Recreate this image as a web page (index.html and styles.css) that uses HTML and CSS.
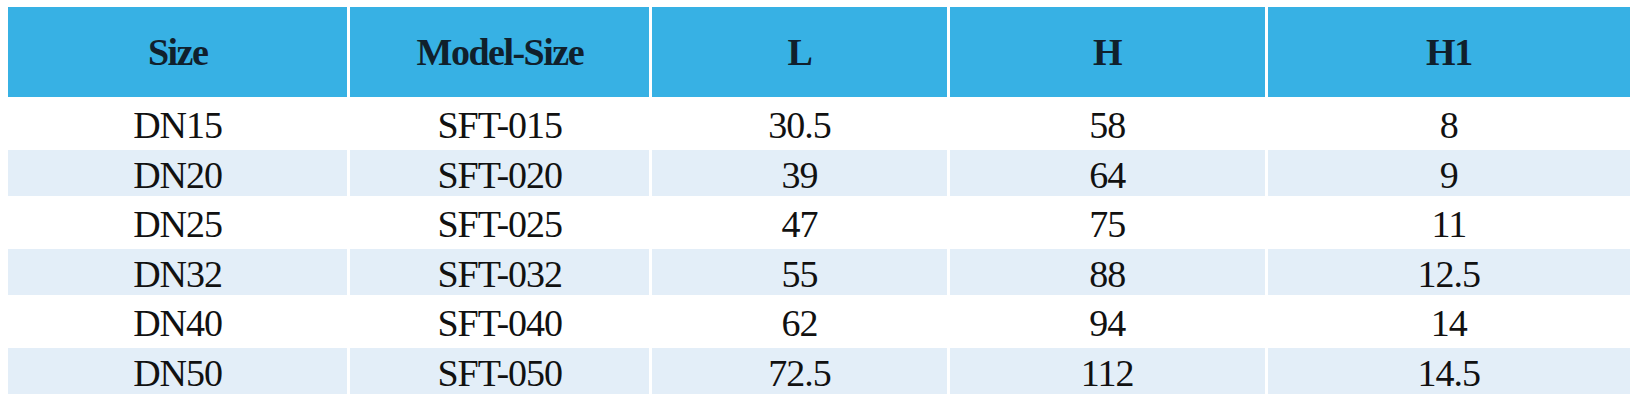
FILE: index.html
```html
<!DOCTYPE html>
<html lang="en">
  <head>
    <meta charset="UTF-8" />
    <meta name="viewport" content="width=device-width, initial-scale=1.0" />
    <title>SFT Dimensions</title>
    <link rel="stylesheet" href="styles.css">
  </head>
  <body>
    <div class="container">
      <table class="spec-table">
        <colgroup>
          <col class="col-size" />
          <col class="col-model" />
          <col class="col-l" />
          <col class="col-h" />
          <col class="col-h1" />
        </colgroup>
        <thead>
          <tr>
            <th>Size</th>
            <th>Model-Size</th>
            <th>L</th>
            <th>H</th>
            <th>H1</th>
          </tr>
        </thead>
        <tbody>
          <tr>
            <td>DN15</td>
            <td>SFT-015</td>
            <td>30.5</td>
            <td>58</td>
            <td>8</td>
          </tr>
          <tr>
            <td>DN20</td>
            <td>SFT-020</td>
            <td>39</td>
            <td>64</td>
            <td>9</td>
          </tr>
          <tr>
            <td>DN25</td>
            <td>SFT-025</td>
            <td>47</td>
            <td>75</td>
            <td>11</td>
          </tr>
          <tr>
            <td>DN32</td>
            <td>SFT-032</td>
            <td>55</td>
            <td>88</td>
            <td>12.5</td>
          </tr>
          <tr>
            <td>DN40</td>
            <td>SFT-040</td>
            <td>62</td>
            <td>94</td>
            <td>14</td>
          </tr>
          <tr>
            <td>DN50</td>
            <td>SFT-050</td>
            <td>72.5</td>
            <td>112</td>
            <td>14.5</td>
          </tr>
        </tbody>
      </table>
    </div>
  </body>
</html>
```

FILE: styles.css
```css
/* Reset */
* {
  margin: 0;
  padding: 0;
  box-sizing: border-box;
}
body {
  font-family: "Liberation Serif", "Times New Roman", serif;
  background: #fff;
  color: #111;
}
.container {
  padding: 4px 0 0 5px;
}
.spec-table {
  border-collapse: separate;
  border-spacing: 3px;
  table-layout: fixed;
  width: 1628px;
}
.col-size {
  width: 339px;
}
.col-model {
  width: 299px;
}
.col-l {
  width: 294px;
}
.col-h {
  width: 315px;
}
.col-h1 {
  width: 362px;
}
th,
td {
  padding: 0;
  text-align: center;
  vertical-align: middle;
  white-space: nowrap;
}
th {
  height: 90px;
  background: #37b1e4;
  color: #10202c;
  font-size: 38px;
  font-weight: 700;
  letter-spacing: -1.5px;
}
td {
  height: 46.5px;
  font-size: 38px;
  line-height: 1;
  padding-top: 4px;
  letter-spacing: -1px;
}
tbody tr:nth-child(even) td {
  background: #e3eef8;
}
```
